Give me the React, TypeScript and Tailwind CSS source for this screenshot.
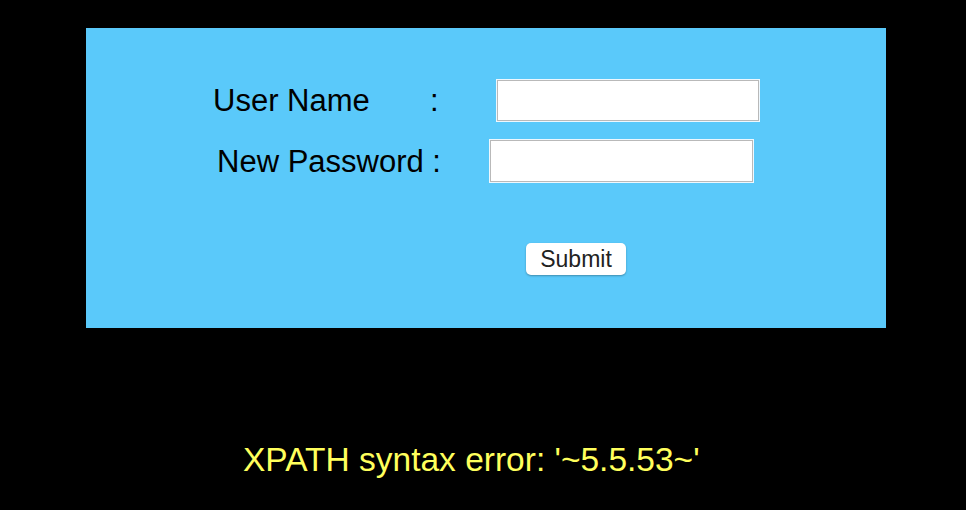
import React from "react";

const font = { fontFamily: '"Liberation Sans", Arial, sans-serif' };

export default function App() {
    return (
        <div className="min-h-[510px] w-full bg-black pt-[28px]" style={font}>
            <div className="ml-[86px] h-[300px] w-[800px] bg-[#5ac9fa] pt-[52px]">
                {/* user name row */}
                <div className="flex items-center pl-[127px]">
                    <span className="w-[217px] text-[31px] leading-none text-black">User Name</span>
                    <span className="w-[67px] text-[31px] leading-none text-black">:</span>
                    <input
                        type="text"
                        className="h-[41px] w-[262px] border border-[#b9b9b9] bg-white shadow-[0_0_0_1px_#eef8fe] outline-none"
                    />
                </div>

                {/* password row */}
                <div className="mt-[19px] flex items-center pl-[131px]">
                    <span className="w-[273px] text-[31px] leading-none text-black">New Password :</span>
                    <input
                        type="password"
                        className="h-[42px] w-[263px] border border-[#b9b9b9] bg-white shadow-[0_0_0_1px_#eef8fe] outline-none"
                    />
                </div>

                <div className="mt-[61px] pl-[440px]">
                    <button
                        type="submit"
                        className="h-[32px] w-[100px] rounded-[5px] bg-white text-[23px] leading-none text-[#222] shadow-[0_1px_2px_rgba(0,0,0,0.3)]"
                    >
                        Submit
                    </button>
                </div>
            </div>

            <div className="mt-[113px] pl-[243px] text-[33.5px] leading-[38px] text-[#ffff5c]">
                XPATH syntax error: '~5.5.53~'
            </div>
        </div>
    );
}
